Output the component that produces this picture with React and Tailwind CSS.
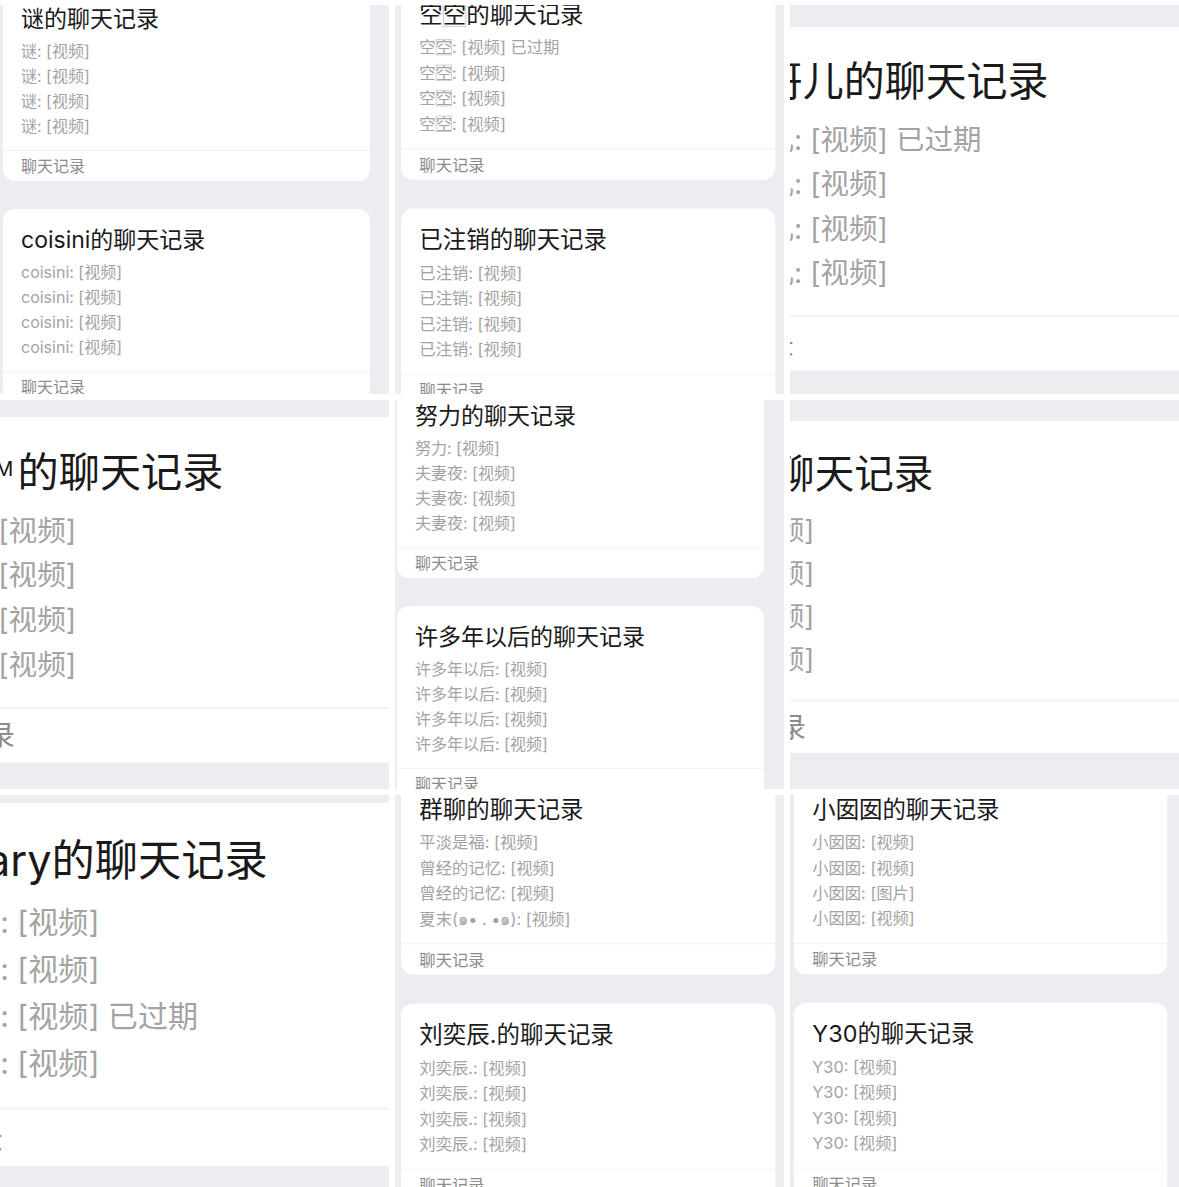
import React from "react";

function Card({ title, items }) {
  return (
    <div className="w-[367px] shrink-0 rounded-[12px] bg-white">
      <div className="pl-[18px] pt-[17px]">
        <div className="whitespace-nowrap text-[23px] leading-[28px] text-[#1a1a1a]">{title}</div>
        <div className="mt-[6px] pb-[11px]">
          {items.map((it, i) => (
            <div key={i} className="whitespace-nowrap text-[16px] leading-[25px] text-[#a3a3a3]">
              {it}
            </div>
          ))}
        </div>
      </div>
      <div className="flex h-[31px] items-center border-t border-[#f2f2f4] pl-[18px] text-[16px] text-[#8c8c8c]">
        聊天记录
      </div>
    </div>
  );
}

function Tile({ wrap, children }) {
  return (
    <div className="relative overflow-hidden bg-[#EDEDF1]">
      <div className={"flex flex-col gap-[28px] origin-top-left " + wrap}>{children}</div>
    </div>
  );
}

/* name column that ends at a fixed width (longer names spill to the left) */
function LongName({ children }) {
  return <span className="inline-flex w-[3.9em] justify-end whitespace-nowrap">{children}</span>;
}

function ShortName({ children }) {
  return <span className="inline-block w-[2.85em] whitespace-nowrap text-right">{children}</span>;
}

function Kong() {
  return (
    <>
      空<span className="inline-block leading-none outline outline-1 outline-offset-[-1px] outline-[#cfcfcf]">空</span>
    </>
  );
}

function SupM() {
  return <span className="relative top-[-0.55em] mr-[0.2em] text-[0.5em] leading-none">M</span>;
}

const rep = (s, n = 4) => Array.from({ length: n }, () => s);

export default function App() {
  return (
    <div className="h-[1187px] w-[1179px] overflow-hidden bg-white pt-[5px] font-['Inter','Noto_Sans_CJK_SC',sans-serif]">
      <div className="grid grid-cols-3 grid-rows-[389px_389px_392px] gap-x-[6px] gap-y-[6px]">
        {/* Tile 1 */}
        <Tile wrap="ml-[3px] mt-[-17px]">
          <Card title="谜的聊天记录" items={rep("谜: [视频]")} />
          <Card title="coisini的聊天记录" items={rep("coisini: [视频]")} />
        </Tile>

        {/* Tile 2 */}
        <Tile wrap="ml-[6px] mt-[-22px] scale-[1.02]">
          <Card
            title={<><Kong />的聊天记录</>}
            items={[
              <><Kong />: [视频] 已过期</>,
              <><Kong />: [视频]</>,
              <><Kong />: [视频]</>,
              <><Kong />: [视频]</>,
            ]}
          />
          <Card title="已注销的聊天记录" items={rep("已注销: [视频]")} />
        </Tile>

        {/* Tile 3 */}
        <Tile wrap="ml-[-142px] mt-[22px] scale-[1.78]">
          <Card
            title="小帅哥儿的聊天记录"
            items={["小帅哥儿: [视频] 已过期", "小帅哥儿: [视频]", "小帅哥儿: [视频]", "小帅哥儿: [视频]"]}
          />
        </Tile>

        {/* Tile 4 */}
        <Tile wrap="ml-[-132px] mt-[17px] scale-[1.79]">
          <Card
            title={<><ShortName>小小<SupM /></ShortName>的聊天记录</>}
            items={rep(<><ShortName>小小<SupM /></ShortName>: [视频]</>)}
          />
        </Tile>

        {/* Tile 5 */}
        <Tile wrap="ml-[2px] mt-[-15px]">
          <Card
            title="努力的聊天记录"
            items={["努力: [视频]", "夫妻夜: [视频]", "夫妻夜: [视频]", "夫妻夜: [视频]"]}
          />
          <Card title="许多年以后的聊天记录" items={rep("许多年以后: [视频]")} />
        </Tile>

        {/* Tile 6 */}
        <Tile wrap="ml-[-125px] mt-[21px] scale-[1.72]">
          <Card title="鱼的聊天记录" items={rep("鱼: [视频]")} />
        </Tile>

        {/* Tile 7 */}
        <Tile wrap="ml-[-151px] mt-[8px] scale-[1.88]">
          <Card
            title={<><LongName>Rosemary</LongName>的聊天记录</>}
            items={[
              <><LongName>Rosemary</LongName>: [视频]</>,
              <><LongName>Rosemary</LongName>: [视频]</>,
              <><LongName>Rosemary</LongName>: [视频] 已过期</>,
              <><LongName>Rosemary</LongName>: [视频]</>,
            ]}
          />
        </Tile>

        {/* Tile 8 */}
        <Tile wrap="ml-[6px] mt-[-17px] scale-[1.02]">
          <Card
            title="群聊的聊天记录"
            items={["平淡是福: [视频]", "曾经的记忆: [视频]", "曾经的记忆: [视频]", "夏末(๑• . •๑): [视频]"]}
          />
          <Card title="刘奕辰.的聊天记录" items={rep("刘奕辰.: [视频]")} />
        </Tile>

        {/* Tile 9 */}
        <Tile wrap="ml-[4px] mt-[-17px] scale-[1.017]">
          <Card
            title="小囡囡的聊天记录"
            items={["小囡囡: [视频]", "小囡囡: [视频]", "小囡囡: [图片]", "小囡囡: [视频]"]}
          />
          <Card title="Y30的聊天记录" items={rep("Y30: [视频]")} />
        </Tile>
      </div>
    </div>
  );
}
